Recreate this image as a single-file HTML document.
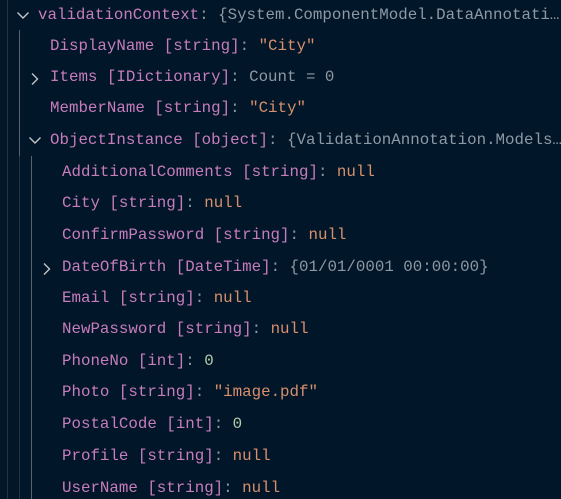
<!DOCTYPE html>
<html><head><meta charset="utf-8"><style>
html,body{margin:0;padding:0;background:#011629;width:561px;height:499px;overflow:hidden}
body{position:relative;font-family:"Liberation Mono",monospace;font-size:15.8px}
.r{position:absolute;left:0;height:31px;line-height:31px;white-space:nowrap;width:561px;overflow:hidden}
.t{position:absolute;top:0;white-space:nowrap}
.n{color:#c77dbb}.s{color:#d9906c}.g{color:#8e99a3}.num{color:#b5cea8}
.c{position:absolute;top:10px}
.gl{position:absolute;width:1px}
</style></head><body>
<div class="gl" style="left:7px;top:0;height:499px;background:#28323d"></div>
<div class="gl" style="left:19px;top:30px;height:126px;background:#5a636c"></div>
<div class="gl" style="left:19px;top:156px;height:343px;background:#28323d"></div>
<div class="gl" style="left:31px;top:156px;height:343px;background:#5a636c"></div>

<div class="r" style="top:0"><svg class="c" style="left:16px" width="14" height="10"><path d="M1.5 2.5 L7 8 L12.5 2.5" stroke="#c5c5c5" stroke-width="1.4" fill="none"/></svg><div class="t" style="left:38px"><span class="n">validationContext</span><span class="g">: {System.ComponentModel.DataAnnotati…</span></div></div>

<div class="r" style="top:31px"><div class="t" style="left:50px"><span class="n">DisplayName [string]</span><span class="g">: </span><span class="s">"City"</span></div></div>
<div class="r" style="top:62px"><svg class="c" style="left:29px" width="12" height="14"><path d="M3 1.5 L8.5 7 L3 12.5" stroke="#c5c5c5" stroke-width="1.4" fill="none"/></svg><div class="t" style="left:50px"><span class="n">Items [IDictionary]</span><span class="g">: Count = 0</span></div></div>
<div class="r" style="top:93px"><div class="t" style="left:50px"><span class="n">MemberName [string]</span><span class="g">: </span><span class="s">"City"</span></div></div>
<div class="r" style="top:125px"><svg class="c" style="left:28px" width="14" height="10"><path d="M1.5 2.5 L7 8 L12.5 2.5" stroke="#c5c5c5" stroke-width="1.4" fill="none"/></svg><div class="t" style="left:50px"><span class="n">ObjectInstance [object]</span><span class="g">: {ValidationAnnotation.Models…</span></div></div>

<div class="r" style="top:157px"><div class="t" style="left:62px"><span class="n">AdditionalComments [string]</span><span class="g">: </span><span class="s">null</span></div></div>
<div class="r" style="top:188px"><div class="t" style="left:62px"><span class="n">City [string]</span><span class="g">: </span><span class="s">null</span></div></div>
<div class="r" style="top:220px"><div class="t" style="left:62px"><span class="n">ConfirmPassword [string]</span><span class="g">: </span><span class="s">null</span></div></div>
<div class="r" style="top:252px"><svg class="c" style="left:41px" width="12" height="14"><path d="M3 1.5 L8.5 7 L3 12.5" stroke="#c5c5c5" stroke-width="1.4" fill="none"/></svg><div class="t" style="left:62px"><span class="n">DateOfBirth [DateTime]</span><span class="g">: {01/01/0001 00:00:00}</span></div></div>
<div class="r" style="top:283px"><div class="t" style="left:62px"><span class="n">Email [string]</span><span class="g">: </span><span class="s">null</span></div></div>
<div class="r" style="top:314px"><div class="t" style="left:62px"><span class="n">NewPassword [string]</span><span class="g">: </span><span class="s">null</span></div></div>
<div class="r" style="top:346px"><div class="t" style="left:62px"><span class="n">PhoneNo [int]</span><span class="g">: </span><span class="num">0</span></div></div>
<div class="r" style="top:377px"><div class="t" style="left:62px"><span class="n">Photo [string]</span><span class="g">: </span><span class="s">"image.pdf"</span></div></div>
<div class="r" style="top:409px"><div class="t" style="left:62px"><span class="n">PostalCode [int]</span><span class="g">: </span><span class="num">0</span></div></div>
<div class="r" style="top:441px"><div class="t" style="left:62px"><span class="n">Profile [string]</span><span class="g">: </span><span class="s">null</span></div></div>
<div class="r" style="top:473px"><div class="t" style="left:62px"><span class="n">UserName [string]</span><span class="g">: </span><span class="s">null</span></div></div>
</body></html>
